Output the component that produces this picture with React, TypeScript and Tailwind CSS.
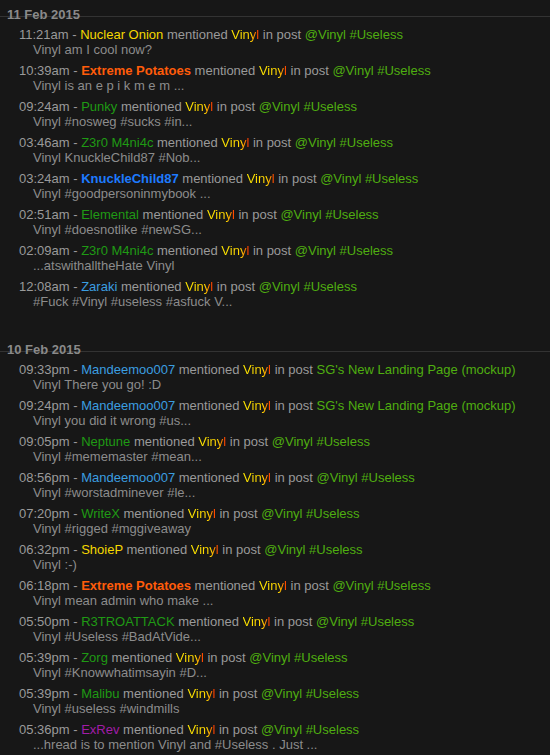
import React from 'react';

type Mention = {
  time: string;
  user: string;
  userClass: string;
  post: string;
  excerpt: string;
};

const YELLOW = 'text-[#f5d800]';
const ORANGE = 'text-[#ff5c0a] font-bold';
const GREEN = 'text-[#1f9a14]';
const SKY = 'text-[#3b9ee0]';
const BLUE = 'text-[#1e7bff] font-bold';
const PURPLE = 'text-[#a21ca8]';

const days: { date: string; items: Mention[] }[] = [
  {
    date: '11 Feb 2015',
    items: [
      { time: '11:21am', user: 'Nuclear Onion', userClass: YELLOW, post: '@Vinyl #Useless', excerpt: 'Vinyl am I cool now?' },
      { time: '10:39am', user: 'Extreme Potatoes', userClass: ORANGE, post: '@Vinyl #Useless', excerpt: 'Vinyl is an e p i k m e m ...' },
      { time: '09:24am', user: 'Punky', userClass: GREEN, post: '@Vinyl #Useless', excerpt: 'Vinyl #nosweg #sucks #in...' },
      { time: '03:46am', user: 'Z3r0 M4ni4c', userClass: GREEN, post: '@Vinyl #Useless', excerpt: 'Vinyl KnuckleChild87 #Nob...' },
      { time: '03:24am', user: 'KnuckleChild87', userClass: BLUE, post: '@Vinyl #Useless', excerpt: 'Vinyl #goodpersoninmybook ...' },
      { time: '02:51am', user: 'Elemental', userClass: GREEN, post: '@Vinyl #Useless', excerpt: 'Vinyl #doesnotlike #newSG...' },
      { time: '02:09am', user: 'Z3r0 M4ni4c', userClass: GREEN, post: '@Vinyl #Useless', excerpt: '...atswithalltheHate Vinyl' },
      { time: '12:08am', user: 'Zaraki', userClass: SKY, post: '@Vinyl #Useless', excerpt: '#Fuck #Vinyl #useless #asfuck V...' },
    ],
  },
  {
    date: '10 Feb 2015',
    items: [
      { time: '09:33pm', user: 'Mandeemoo007', userClass: SKY, post: "SG's New Landing Page (mockup)", excerpt: 'Vinyl There you go! :D' },
      { time: '09:24pm', user: 'Mandeemoo007', userClass: SKY, post: "SG's New Landing Page (mockup)", excerpt: 'Vinyl you did it wrong #us...' },
      { time: '09:05pm', user: 'Neptune', userClass: GREEN, post: '@Vinyl #Useless', excerpt: 'Vinyl #mememaster #mean...' },
      { time: '08:56pm', user: 'Mandeemoo007', userClass: SKY, post: '@Vinyl #Useless', excerpt: 'Vinyl #worstadminever #le...' },
      { time: '07:20pm', user: 'WriteX', userClass: GREEN, post: '@Vinyl #Useless', excerpt: 'Vinyl #rigged #mggiveaway' },
      { time: '06:32pm', user: 'ShoieP', userClass: YELLOW, post: '@Vinyl #Useless', excerpt: 'Vinyl :-)' },
      { time: '06:18pm', user: 'Extreme Potatoes', userClass: ORANGE, post: '@Vinyl #Useless', excerpt: 'Vinyl mean admin who make ...' },
      { time: '05:50pm', user: 'R3TROATTACK', userClass: GREEN, post: '@Vinyl #Useless', excerpt: 'Vinyl #Useless #BadAtVide...' },
      { time: '05:39pm', user: 'Zorg', userClass: GREEN, post: '@Vinyl #Useless', excerpt: 'Vinyl #Knowwhatimsayin #D...' },
      { time: '05:39pm', user: 'Malibu', userClass: GREEN, post: '@Vinyl #Useless', excerpt: 'Vinyl #useless #windmills' },
      { time: '05:36pm', user: 'ExRev', userClass: PURPLE, post: '@Vinyl #Useless', excerpt: '...hread is to mention Vinyl and #Useless . Just ...' },
    ],
  },
];

function Vinyl() {
  return (
    <span className="bg-[linear-gradient(to_right,#ffe800_0%,#ffd400_72%,#ff2a00_100%)] bg-clip-text text-transparent">
      Vinyl
    </span>
  );
}

export default function App() {
  return (
    <div className="min-h-[755px] w-[550px] bg-[#171717] pt-[7px] font-['Liberation_Sans',Arial,sans-serif] text-[13px] leading-[15px] text-[#9a9a9a]">
      {days.map((day, i) => (
        <div key={day.date} className={i > 0 ? 'mt-[33px]' : ''}>
          {/* date header with rule */}
          <div className="h-[16px] bg-[linear-gradient(to_bottom,transparent_9px,#333_9px,#333_10px,transparent_10px)] pl-[7px] font-bold leading-[16px] text-[#8a8a8a]">
            {day.date}
          </div>
          <div className="mt-[4px] flex flex-col gap-[6px]">
            {day.items.map((m, j) => (
              <div key={j} className="pl-[19px]">
                <div className="whitespace-nowrap">
                  {m.time} - <span className={m.userClass}>{m.user}</span> mentioned <Vinyl /> in post{' '}
                  <span className="text-[#4fae10]">{m.post}</span>
                </div>
                <div className="whitespace-nowrap pl-[14px] text-[#8c8c8c]">{m.excerpt}</div>
              </div>
            ))}
          </div>
        </div>
      ))}
    </div>
  );
}
